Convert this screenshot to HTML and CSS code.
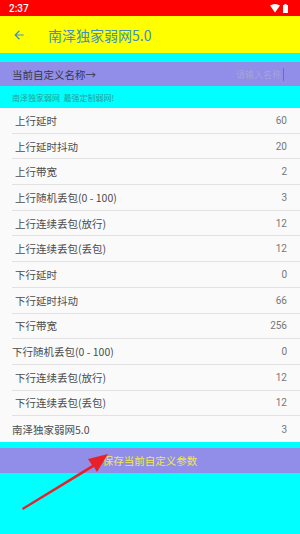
FILE: index.html
```html
<!DOCTYPE html>
<html lang="zh">

<head>
    <meta charset="UTF-8">
    <title>南泽独家弱网5.0</title>
    <link rel="stylesheet" href="styles.css">
</head>

<body>
    <div class="status">
        <span class="time">2:37</span>
        <span class="sys">
            <svg width="10" height="9" viewBox="0 0 10 9"><path d="M0 1.5 Q5 -1.5 10 1.5 L5 8.5 Z" fill="#fff"/></svg>
            <svg width="5" height="9" viewBox="0 0 5 9"><rect x="0" y="1" width="5" height="8" fill="#fff"/><rect x="1.5" y="0" width="2" height="1" fill="#fff"/></svg>
        </span>
    </div>

    <div class="toolbar">
        <svg class="back" width="14" height="14" viewBox="0 0 24 24"><path d="M20 11H7.83l5.59-5.59L12 4l-8 8 8 8 1.41-1.41L7.83 13H20v-2z" fill="#3d8fc4"/></svg>
        <span class="title">南泽独家弱网5.0</span>
    </div>

    <div class="name-bar">
        <span>当前自定义名称→</span>
        <span class="input">请输入名称<i class="cursor"></i></span>
    </div>

    <div class="tip">南泽独家弱网&nbsp;&nbsp;最强定制弱网!</div>

    <div class="list">
        <div class="row"><span>上行延时</span><span class="val">60</span></div>
        <div class="row"><span>上行延时抖动</span><span class="val">20</span></div>
        <div class="row"><span>上行带宽</span><span class="val">2</span></div>
        <div class="row"><span>上行随机丢包(0 - 100)</span><span class="val">3</span></div>
        <div class="row"><span>上行连续丢包(放行)</span><span class="val">12</span></div>
        <div class="row"><span>上行连续丢包(丢包)</span><span class="val">12</span></div>
        <div class="row"><span>下行延时</span><span class="val">0</span></div>
        <div class="row"><span>下行延时抖动</span><span class="val">66</span></div>
        <div class="row"><span>下行带宽</span><span class="val">256</span></div>
        <div class="row flush"><span>下行随机丢包(0 - 100)</span><span class="val">0</span></div>
        <div class="row"><span>下行连续丢包(放行)</span><span class="val">12</span></div>
        <div class="row"><span>下行连续丢包(丢包)</span><span class="val">12</span></div>
        <div class="row flush last"><span>南泽独家弱网5.0</span><span class="val">3</span></div>
    </div>

    <div class="save">保存当前自定义参数</div>

    <!-- annotation arrow drawn over the screenshot -->
    <svg class="arrow" width="300" height="534" viewBox="0 0 300 534">
        <path d="M22 508 L92 465 L88 459 L108 454 L97 472 L94 467 L23 510 Z" fill="#e8202a"/>
    </svg>
</body>

</html>
```

FILE: styles.css
```css
body {
    margin: 0;
    width: 300px;
    height: 534px;
    background: #00ffff;
    font-family: "Noto Sans CJK SC", "Noto Sans", sans-serif;
    position: relative;
    overflow: hidden;
}

.status {
    height: 16px;
    background: #ff0000;
    display: flex;
    align-items: center;
    justify-content: space-between;
    padding: 0 12px 0 9px;
}
.time {
    color: #fff;
    font-family: Roboto, sans-serif;
    font-size: 10px;
    font-weight: 500;
}
.sys {
    display: flex;
    gap: 3px;
    align-items: center;
}

.toolbar {
    height: 37px;
    background: #ffff00;
    display: flex;
    align-items: center;
    padding-left: 12px;
}
.back {
    margin-right: 22px;
}
.title {
    color: #3d8fc4;
    font-size: 14px;
}

.name-bar {
    margin-top: 9px;
    height: 24px;
    background: #908ee8;
    display: flex;
    align-items: center;
    justify-content: space-between;
    padding: 0 16px 0 12px;
    font-size: 10.5px;
    color: #383848;
}
.input {
    color: #a6a3d6;
    font-size: 9px;
    display: flex;
    align-items: center;
}
.cursor {
    display: inline-block;
    width: 1px;
    height: 13px;
    background: #d0409a;
    margin-left: 2px;
}

.tip {
    height: 22px;
    display: flex;
    align-items: center;
    padding-left: 12px;
    font-size: 8px;
    color: #2e9a9a;
}

.list {
    background: #fafafa;
}
.row {
    height: 25.7px;
    box-sizing: border-box;
    margin-left: 12px;
    border-bottom: 1px solid #e2e2e2;
    display: flex;
    align-items: center;
    justify-content: space-between;
    padding: 0 13px 0 3px;
    font-size: 10.5px;
    color: #4c4c4c;
}
.row.flush {
    padding-left: 0;
}
.row.last {
    border-bottom: none;
}
.val {
    font-family: Roboto, sans-serif;
    font-size: 10px;
    color: #777;
}

.save {
    margin-top: 6px;
    height: 25px;
    background: #908ee8;
    display: flex;
    align-items: center;
    justify-content: center;
    font-size: 10.5px;
    color: #f2e84a;
}

.arrow {
    position: absolute;
    left: 0;
    top: 0;
    pointer-events: none;
}
```
